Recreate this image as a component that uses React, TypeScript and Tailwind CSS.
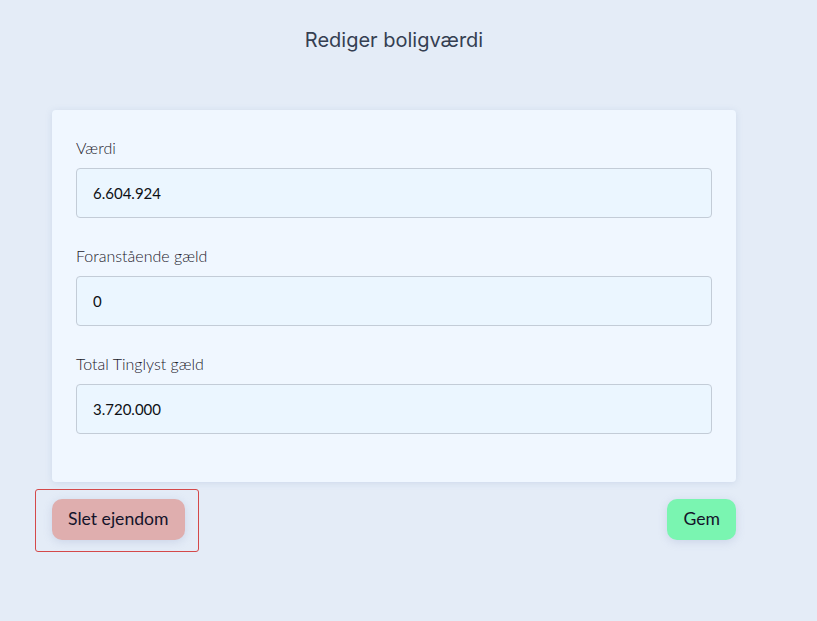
import React from "react";

const fields = [
  { label: "Værdi", value: "6.604.924" },
  { label: "Foranstående gæld", value: "0" },
  { label: "Total Tinglyst gæld", value: "3.720.000" },
];

export default function App() {
  return (
    <div className="min-h-[621px] w-full bg-[#e4ecf7] font-['Lato',sans-serif]">
      <div className="ml-[52px] w-[684px] pt-[26px]">
        {/* Title */}
        <h1 className="text-center font-['Inter',sans-serif] text-[20px] leading-[28px] text-[#353f52]">
          Rediger boligværdi
        </h1>

        {/* Card */}
        <div className="mt-[56px] rounded-[4px] bg-[#f0f7ff] px-6 pt-[26px] pb-[22px] shadow-[0_1px_6px_rgba(140,160,200,0.25)]">
          {fields.map((f) => (
            <div key={f.label} className="mb-[26px]">
              <label className="block text-[16px] font-light leading-[24px] text-[#1c212b]">
                {f.label}
              </label>
              <input
                readOnly
                value={f.value}
                className="mt-2 h-[50px] w-full rounded-[4px] border border-[#c3ccd7] bg-[#ebf6ff] px-4 text-[15px] text-[#0e1015] outline-none"
              />
            </div>
          ))}
        </div>

        {/* Actions */}
        <div className="mt-[17px] flex items-start justify-between">
          <div className="relative">
            <button className="h-[41px] rounded-[10px] bg-[#dfaeae] px-4 text-[17.6px] text-[#14142a] shadow-[0_2px_8px_rgba(150,160,200,0.3)]">
              Slet ejendom
            </button>
            <div className="pointer-events-none absolute -left-[17px] -right-[14px] -top-[10px] -bottom-[12px] rounded-[3px] border border-[#d4494a]" />
          </div>
          <button className="h-[41px] rounded-[10px] bg-[#7af5b1] px-4 text-[17.6px] text-[#14142a] shadow-[0_2px_8px_rgba(150,160,200,0.3)]">
            Gem
          </button>
        </div>
      </div>
    </div>
  );
}
